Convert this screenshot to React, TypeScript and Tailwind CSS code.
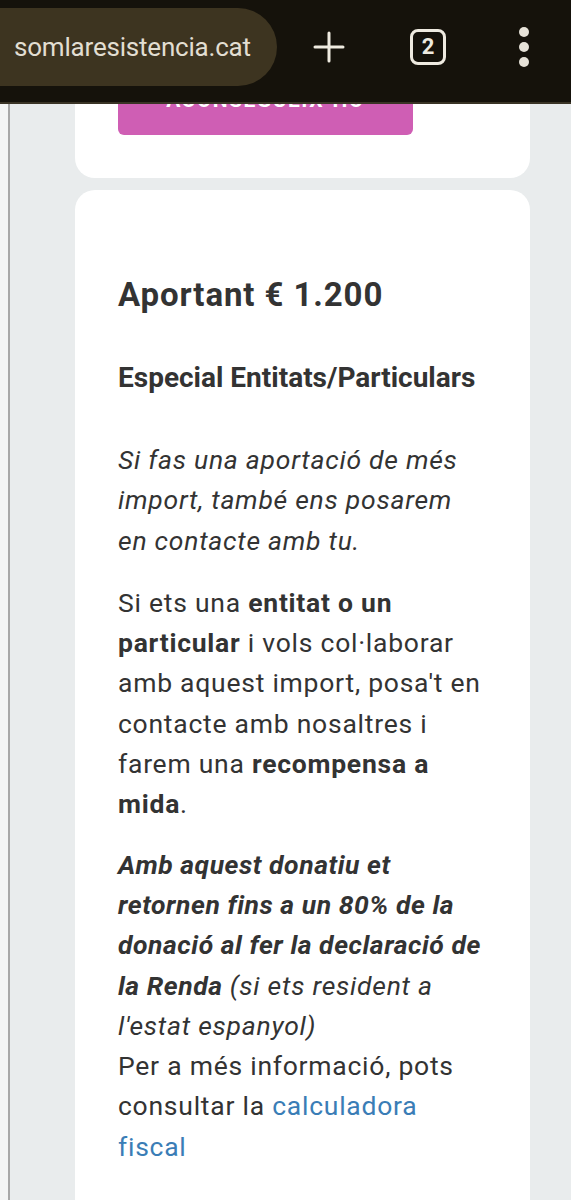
import React from 'react';

const font = { fontFamily: 'Roboto, "Noto Sans", sans-serif' };

const TopBar: React.FC = () => (
  <div className="relative z-10 h-[104px] bg-[#15120b] border-b-2 border-[#3a3426] flex items-center">
    <div className="h-[78px] w-[317px] -ml-[40px] pl-[54px] rounded-full bg-[#3d3420] flex items-center mt-[-8px]">
      <span className="text-[26px] text-[#e2ded2] tracking-[-0.2px]">somlaresistencia.cat</span>
    </div>
    <div className="ml-[36px] w-[32px] h-[32px] flex items-center justify-center mt-[-8px]">
      <svg width="32" height="32" viewBox="0 0 32 32">
        <path d="M16 2v28M2 16h28" stroke="#eeeae0" strokeWidth="3" strokeLinecap="round" />
      </svg>
    </div>
    <div className="ml-[65px] w-[36px] h-[36px] rounded-[8px] border-[3px] border-[#eeeae0] flex items-center justify-center mt-[-8px]">
      <span className="text-[22px] font-bold text-[#eeeae0] leading-none">2</span>
    </div>
    <div className="ml-[73px] flex flex-col gap-[5px] mt-[-8px]">
      <span className="block w-[10px] h-[10px] rounded-full bg-[#e6e2d8]" />
      <span className="block w-[10px] h-[10px] rounded-full bg-[#e6e2d8]" />
      <span className="block w-[10px] h-[10px] rounded-full bg-[#e6e2d8]" />
    </div>
  </div>
);

export default function App() {
  return (
    <div className="w-[571px] h-[1200px] overflow-hidden bg-[#e9eced] text-[#333333]" style={font}>
      <TopBar />
      <div className="flex h-[1096px]">
        <div className="w-[10px] bg-[#f4f5f5] border-r-2 border-[#a8a8a8]" />
        <div className="flex-1 overflow-hidden pl-[65px] pr-[41px]">
          {/* card with the button, mostly scrolled away */}
          <div className="-mt-[60px] bg-white rounded-[20px] pl-[43px] pt-[20px] pb-[43px]">
            <div className="w-[295px] h-[71px] bg-[#cf5eb4] rounded-[6px] flex items-center justify-center pt-[3px]">
              <span className="text-[21px] font-bold text-white tracking-[1.5px] uppercase">Aconsegueix-ho</span>
            </div>
          </div>

          <div className="mt-[12px] bg-white rounded-[20px] pl-[43px] pr-[43px] pt-[86px] pb-[60px]">
            <h2 className="text-[33px] font-bold leading-[38px] tracking-[0.9px]">Aportant € 1.200</h2>
            <h3 className="mt-[48px] text-[28px] font-bold leading-[32px]">Especial Entitats/Particulars</h3>
            <div className="mt-[46px] text-[26.5px] leading-[40.3px] tracking-[0.75px]">
              <p className="italic">Si fas una aportació de més import, també ens posarem en contacte amb tu.</p>
              <p className="mt-[22px]">
                Si ets una <strong>entitat o un particular</strong> i vols col·laborar amb aquest import, posa't en
                contacte amb nosaltres i farem una <strong>recompensa a mida</strong>.
              </p>
              <p className="mt-[20px]">
                <em className="font-bold tracking-[0.55px]">
                  Amb aquest donatiu et retornen fins a un 80% de la donació al fer la declaració de la Renda
                </em>{' '}
                <em>(si ets resident a l'estat espanyol)</em>
                <br />
                Per a més informació, pots consultar la{' '}
                <a href="#" className="text-[#3a7db6]">
                  calculadora fiscal
                </a>
              </p>
            </div>
          </div>
        </div>
      </div>
    </div>
  );
}
